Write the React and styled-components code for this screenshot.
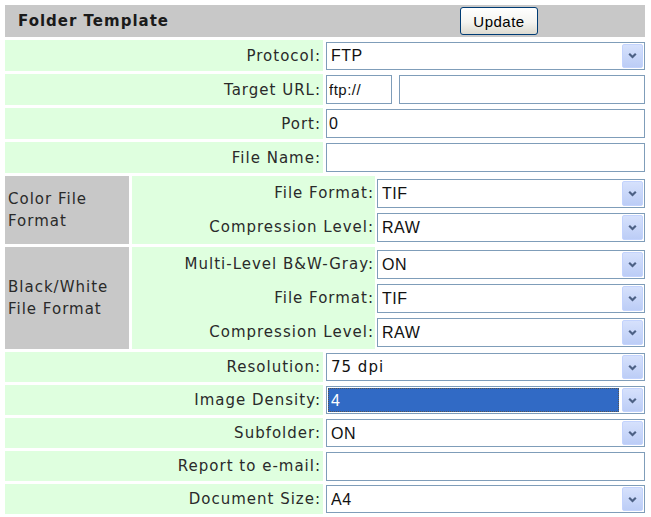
import React from "react";
import styled, { createGlobalStyle } from "styled-components";

const GlobalStyle = createGlobalStyle`
  body {
    margin: 0;
    background: #ffffff;
  }
`;

const Page = styled.div`
  width: 640px;
  padding: 5px 6px 0 5px;
  font-family: "DejaVu Sans", Verdana, sans-serif;
  font-size: 15px;
  letter-spacing: 1px;
  color: #2a2a2a;
`;

const Table = styled.div`
  display: flex;
  flex-direction: column;
  gap: 3px;
`;

const Header = styled.div`
  height: 32px;
  display: flex;
  align-items: center;
  padding-left: 13px;
  background: #c8c8c8;
`;

const Title = styled.span`
  flex: 0 0 442px;
  font-weight: bold;
  color: #1a1a1a;
`;

const UpdateButton = styled.button`
  width: 78px;
  height: 28px;
  padding: 0;
  border: 1px solid #003c74;
  border-radius: 3px;
  background: linear-gradient(#ffffff, #f4f4f0 55%, #dcdad0);
  font-family: "Liberation Sans", Arial, sans-serif;
  font-size: 15px;
  letter-spacing: 0.5px;
  color: #000;
`;

const Row = styled.div`
  height: ${(p) => p.$h || 30}px;
  display: grid;
  grid-template-columns: 318px 1fr;
  column-gap: 3px;
`;

const Label = styled.div`
  display: flex;
  align-items: center;
  justify-content: flex-end;
  padding-right: 2px;
  background: #dfffdf;
  white-space: nowrap;
`;

const Cell = styled.div`
  display: flex;
  align-items: center;
  gap: 7px;
`;

const Group = styled.div`
  display: grid;
  grid-template-columns: 124px 1fr;
  column-gap: 3px;
`;

const Category = styled.div`
  display: flex;
  align-items: center;
  padding-left: 3px;
  line-height: 22px;
  background: #c8c8c8;
`;

const Inner = styled.div`
  display: grid;
  grid-template-columns: 243px 1fr;
  grid-auto-rows: 34px;
  column-gap: 2px;
`;

const InnerLabel = styled(Label)`
  padding-right: 1px;
`;

const Combo = styled.div`
  flex: 1;
  height: ${(p) => p.$h || 28}px;
  box-sizing: border-box;
  display: flex;
  padding: 1px;
  border: 1px solid #7f9db9;
  background: #fff;
`;

const Select = styled.select`
  flex: 1;
  min-width: 0;
  margin: 0 3px 0 0;
  padding: 0 3px;
  appearance: none;
  border: 0;
  outline: ${(p) => (p.$focused ? "1px dotted #555" : "none")};
  outline-offset: -1px;
  background: ${(p) => (p.$focused ? "#316ac5" : "transparent")};
  color: ${(p) => (p.$focused ? "#fff" : "#111")};
  font-family: ${(p) =>
    p.$verdana ? '"DejaVu Sans", Verdana, sans-serif' : '"Liberation Sans", Arial, sans-serif'};
  font-size: ${(p) => (p.$verdana ? 15 : 16)}px;
  letter-spacing: ${(p) => (p.$verdana ? 1 : 0.5)}px;
`;

const ArrowBox = styled.span`
  width: 19px;
  display: flex;
  align-items: center;
  justify-content: center;
  border: 1px solid #c3d3fd;
  border-radius: 2px;
  background: linear-gradient(#d6e1fc, #bccdf6);
`;

const TextInput = styled.input`
  width: ${(p) => (p.$width ? `${p.$width}px` : "auto")};
  flex: ${(p) => (p.$width ? "none" : 1)};
  height: 29px;
  box-sizing: border-box;
  padding: 0 2px;
  border: 1px solid #7f9db9;
  outline: none;
  background: #fff;
  font-family: "Liberation Sans", Arial, sans-serif;
  font-size: ${(p) => p.$size || 16}px;
  letter-spacing: 0.5px;
  color: #111;
`;

const Chevron = () => (
  <svg width="9" height="7" viewBox="0 0 9 7">
    <path d="M1.2 1.8 L4.5 5 L7.8 1.8" fill="none" stroke="#4d6185" strokeWidth="2.2" />
  </svg>
);

const Dropdown = ({ value, h, focused, verdana }) => (
  <Combo $h={h}>
    <Select defaultValue={value} $focused={focused} $verdana={verdana}>
      <option value={value}>{value}</option>
    </Select>
    <ArrowBox>
      <Chevron />
    </ArrowBox>
  </Combo>
);

const Field = ({ label, h, children }) => (
  <Row $h={h}>
    <Label>{label}</Label>
    <Cell>{children}</Cell>
  </Row>
);

const FieldGroup = ({ title, rows }) => (
  <Group>
    <Category>{title}</Category>
    <Inner>
      {rows.map(([label, value]) => (
        <React.Fragment key={label}>
          <InnerLabel>{label}</InnerLabel>
          <Cell>
            <Dropdown value={value} h={29} />
          </Cell>
        </React.Fragment>
      ))}
    </Inner>
  </Group>
);

const App = () => (
  <Page>
    <GlobalStyle />
    <Table>
      <Header>
        <Title>Folder Template</Title>
        <UpdateButton type="button">Update</UpdateButton>
      </Header>
      <Field label="Protocol:" h={31}>
        <Dropdown value="FTP" />
      </Field>
      <Field label="Target URL:" h={31}>
        <TextInput $width={66} $size={15} defaultValue="ftp://" />
        <TextInput defaultValue="" />
      </Field>
      <Field label="Port:" h={31}>
        <TextInput defaultValue="0" />
      </Field>
      <Field label="File Name:" h={31}>
        <TextInput defaultValue="" />
      </Field>
      <FieldGroup
        title="Color File Format"
        rows={[
          ["File Format:", "TIF"],
          ["Compression Level:", "RAW"],
        ]}
      />
      <FieldGroup
        title="Black/White File Format"
        rows={[
          ["Multi-Level B&W-Gray:", "ON"],
          ["File Format:", "TIF"],
          ["Compression Level:", "RAW"],
        ]}
      />
      <Field label="Resolution:">
        <Dropdown value="75 dpi" verdana />
      </Field>
      <Field label="Image Density:">
        <Dropdown value="4" focused />
      </Field>
      <Field label="Subfolder:">
        <Dropdown value="ON" />
      </Field>
      <Field label="Report to e-mail:">
        <TextInput defaultValue="" />
      </Field>
      <Field label="Document Size:">
        <Dropdown value="A4" />
      </Field>
    </Table>
  </Page>
);

export default App;
